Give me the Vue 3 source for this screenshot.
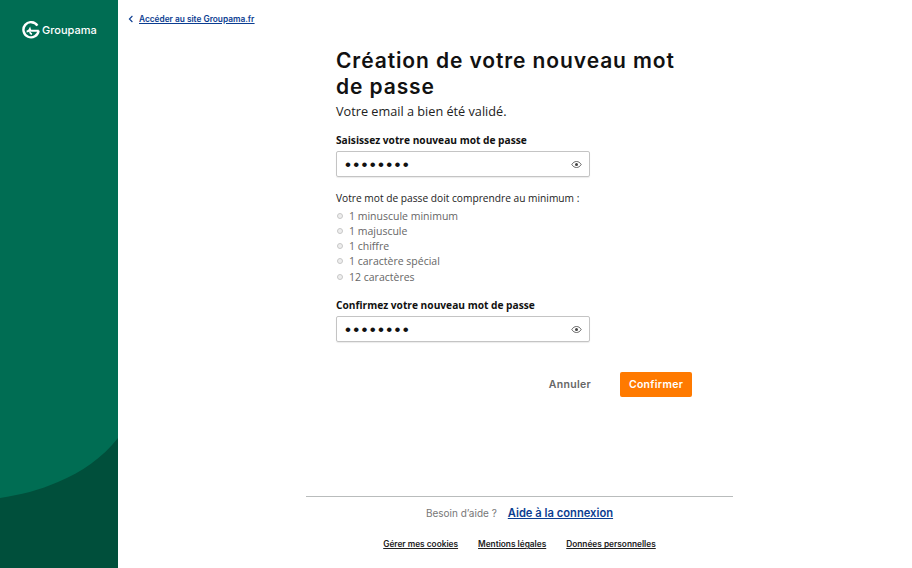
<template>
  <div class="page">
    <aside class="sidebar">
      <div class="logo">
        <svg class="logo-mark" width="18" height="18" viewBox="0 0 18 18" fill="none">
          <path d="M15.4 4.6A7.6 7.6 0 1 0 16.6 9.6" stroke="#fff" stroke-width="2.4" stroke-linecap="butt" />
          <path d="M4.6 10.4c1.6 0 2.6-.7 3.3-2.2.3 1 .9 1.6 1.7 1.6h7.2" stroke="#fff" stroke-width="2" />
          <path d="M7.6 10.2c.2 1.6 1 2.5 2.4 3" stroke="#fff" stroke-width="1.6" />
        </svg>
        <span class="logo-name">Groupama</span>
      </div>
      <svg class="wave" width="118" height="130" viewBox="0 0 118 130" preserveAspectRatio="none">
        <path d="M0 60C20 57 40 52 58 44C82 34 102 20 118 0V130H0Z" fill="#004f3b" />
      </svg>
    </aside>

    <main class="main">
      <a class="back-link" href="#">
        <svg width="6" height="8" viewBox="0 0 6 8" fill="none">
          <path d="M4.4 1 1.4 4l3 3" stroke="#0b3d91" stroke-width="1.1" />
        </svg>
        <span>Accéder au site Groupama.fr</span>
      </a>

      <form class="form" @submit.prevent>
        <h1 class="title">Création de votre nouveau mot de passe</h1>
        <p class="subtitle">Votre email a bien été validé.</p>

        <label class="label">Saisissez votre nouveau mot de passe</label>
        <div class="field">
          <span class="dots">••••••••</span>
          <svg class="eye" width="11" height="9" viewBox="0 0 11 9" fill="none">
            <path d="M.8 4.5C2 2.5 3.6 1.5 5.5 1.5s3.500 1 4.700 3C9 6.500 7.400 7.500 5.500 7.500S2 6.500.8 4.500Z" stroke="#444" stroke-width=".8" />
            <circle cx="5.500" cy="4.500" r="1.500" fill="#444" />
          </svg>
        </div>

        <p class="rules-title">Votre mot de passe doit comprendre au minimum :</p>
        <ul class="rules">
          <li v-for="rule in rules" :key="rule" class="rule">
            <span class="bullet"></span>{{ rule }}
          </li>
        </ul>

        <label class="label">Confirmez votre nouveau mot de passe</label>
        <div class="field">
          <span class="dots">••••••••</span>
          <svg class="eye" width="11" height="9" viewBox="0 0 11 9" fill="none">
            <path d="M.8 4.5C2 2.5 3.6 1.5 5.5 1.5s3.500 1 4.700 3C9 6.500 7.400 7.500 5.500 7.500S2 6.500.8 4.500Z" stroke="#444" stroke-width=".8" />
            <circle cx="5.500" cy="4.500" r="1.500" fill="#444" />
          </svg>
        </div>

        <div class="actions">
          <button class="btn-cancel" type="button">Annuler</button>
          <button class="btn-confirm" type="submit">Confirmer</button>
        </div>
      </form>

      <footer class="footer">
        <div class="help">
          <span class="help-text">Besoin d’aide ?</span>
          <a class="help-link" href="#">Aide à la connexion</a>
        </div>
        <nav class="legal">
          <a v-for="link in legalLinks" :key="link" href="#">{{ link }}</a>
        </nav>
      </footer>
    </main>
  </div>
</template>

<script setup>
const rules = [
  '1 minuscule minimum',
  '1 majuscule',
  '1 chiffre',
  '1 caractère spécial',
  '12 caractères'
]

const legalLinks = ['Gérer mes cookies', 'Mentions légales', 'Données personnelles']
</script>

<style>
html,
body {
  margin: 0;
  background: #fff;
}
</style>

<style scoped>
.page {
  display: flex;
  width: 912px;
  height: 568px;
  overflow: hidden;
  font-family: "Open Sans", "Noto Sans", sans-serif;
  color: #111;
}

.sidebar {
  position: relative;
  flex: 0 0 118px;
  background: #006d53;
}

.logo {
  display: flex;
  align-items: center;
  gap: 2px;
  padding: 21px 0 0 22px;
}

.logo-mark {
  flex: none;
}

.logo-name {
  font-family: Inter, sans-serif;
  font-size: 11px;
  font-weight: 500;
  color: #fff;
}

.wave {
  position: absolute;
  left: 0;
  bottom: 0;
  display: block;
}

.main {
  flex: 1;
  display: flex;
  flex-direction: column;
  min-width: 0;
}

.back-link {
  display: flex;
  align-items: center;
  gap: 5px;
  height: 12px;
  margin: 13px 0 0 10px;
  font-family: Inter, sans-serif;
  font-size: 8.3px;
  font-weight: 600;
  color: #0b3d91;
}

.back-link span {
  text-decoration: underline;
}

.form {
  width: 356px;
  margin: 23px 0 0 218px;
}

.title {
  margin: 0;
  font-family: Inter, sans-serif;
  font-size: 21px;
  line-height: 26px;
  font-weight: 600;
  letter-spacing: 0.9px;
  color: #111;
}

.subtitle {
  margin: 2px 0 0;
  font-size: 12.7px;
  line-height: 18px;
  color: #222;
}

.label {
  display: block;
  margin-top: 12px;
  font-size: 10.2px;
  line-height: 16px;
  font-weight: 700;
  color: #111;
}

.field {
  display: flex;
  align-items: center;
  justify-content: space-between;
  box-sizing: border-box;
  width: 254px;
  height: 26px;
  margin-top: 3px;
  padding: 0 7px 0 8px;
  border: 1px solid #c4c4c4;
  border-radius: 2px;
  box-shadow: 0 1px 1px rgba(0, 0, 0, 0.08);
}

.dots {
  font-family: "Liberation Sans", sans-serif;
  font-size: 17px;
  line-height: 1;
  letter-spacing: 2.3px;
  color: #111;
}

.rules-title {
  margin: 13px 0 0;
  font-size: 10.2px;
  line-height: 16px;
  color: #222;
}

.rules {
  margin: 2px 0 0;
  padding: 0;
  list-style: none;
}

.rule {
  display: flex;
  align-items: center;
  gap: 6px;
  height: 15.25px;
  font-size: 10.5px;
  color: #666;
}

.bullet {
  box-sizing: border-box;
  width: 6px;
  height: 6px;
  margin-left: 1px;
  border: 1px solid #c8c8c8;
  border-radius: 50%;
  background: #eee;
}

.rules + .label {
  margin-top: 13px;
}

.actions {
  display: flex;
  justify-content: flex-end;
  align-items: center;
  gap: 29px;
  margin-top: 30px;
}

.btn-cancel,
.btn-confirm {
  border: 0;
  padding: 0;
  font-family: Inter, sans-serif;
  font-size: 10.5px;
  font-weight: 600;
  letter-spacing: 0.3px;
}

.btn-cancel {
  background: none;
  color: #666;
}

.btn-confirm {
  width: 72px;
  height: 25px;
  border-radius: 2px;
  background: #ff7a00;
  color: #fff;
}

.footer {
  width: 427px;
  margin: 99px 0 0 188px;
  border-top: 1px solid #b9bcbc;
  text-align: center;
}

.help {
  display: flex;
  justify-content: center;
  align-items: center;
  gap: 11px;
  margin-top: 8px;
  height: 16px;
}

.help-text {
  font-family: Inter, sans-serif;
  font-size: 10px;
  color: #777;
}

.help-link {
  font-family: Inter, sans-serif;
  font-size: 11.2px;
  font-weight: 600;
  color: #0b3d91;
  text-decoration: underline;
}

.legal {
  display: flex;
  justify-content: center;
  gap: 20px;
  margin-top: 18px;
}

.legal a {
  font-family: Inter, sans-serif;
  font-size: 8.3px;
  font-weight: 600;
  color: #222;
  text-decoration: underline;
}
</style>
